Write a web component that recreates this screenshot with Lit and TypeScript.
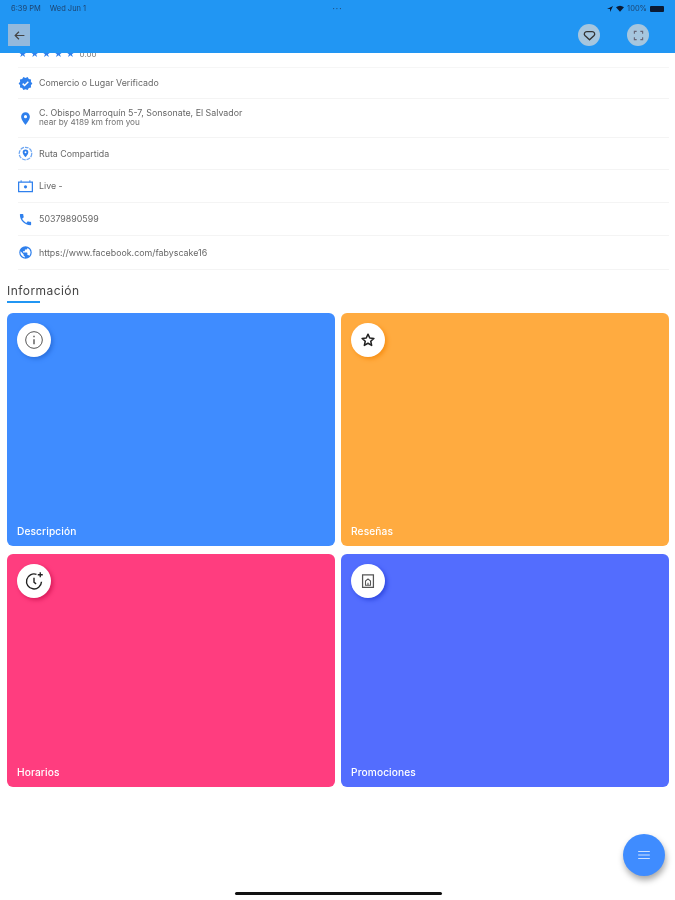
import { LitElement, html, css, svg } from "lit";
import { customElement } from "lit/decorators.js";

const BLUE = "#2f80ed";

const icons: Record<string, any> = {
  verified: svg`<path fill="${BLUE}" d="M23 12l-2.400-2.800.3-3.700-3.600-.8-1.900-3.200L12 3 8.600 1.500 6.700 4.700l-3.600.8.3 3.700L1 12l2.400 2.800-.3 3.700 3.600.8 1.900 3.200L12 21l3.400 1.500 1.900-3.200 3.600-.8-.3-3.700z"/><path fill="none" stroke="#fff" stroke-width="2.400" d="M7.500 12.200l3 3 6-6"/>`,
  pin: svg`<path fill="${BLUE}" d="M12 2C8.100 2 5 5.100 5 9c0 5.200 7 13 7 13s7-7.800 7-13c0-3.900-3.100-7-7-7zm0 9.500A2.500 2.500 0 1 1 12 6.500a2.500 2.500 0 0 1 0 5z"/>`,
  route: svg`<circle cx="12" cy="12" r="10" fill="none" stroke="${BLUE}" stroke-width="2" stroke-dasharray="6 1.500" opacity=".7"/><path fill="${BLUE}" d="M12 5.500a4.500 4.500 0 0 0-4.500 4.500c0 3.300 4.500 8 4.500 8s4.500-4.700 4.500-8A4.500 4.500 0 0 0 12 5.500zm0 6a1.500 1.500 0 1 1 0-3 1.500 1.500 0 0 1 0 3z"/>`,
  live: svg`<path fill="none" stroke="${BLUE}" stroke-width="2" d="M1 5h22v15H1z"/><path stroke="${BLUE}" stroke-width="1.500" d="M5 2v3M19 2v3"/><circle cx="12" cy="12.500" r="2.500" fill="${BLUE}"/>`,
  phone: svg`<path fill="${BLUE}" d="M6.600 10.800c1.400 2.800 3.800 5.100 6.600 6.600l2.200-2.200c.3-.3.700-.4 1-.2 1.100.4 2.300.6 3.600.6.600 0 1 .4 1 1V20c0 .6-.4 1-1 1C10.600 21 3 13.400 3 4c0-.6.400-1 1-1h3.500c.6 0 1 .4 1 1 0 1.300.2 2.500.6 3.600.1.300 0 .7-.2 1z"/>`,
  globe: svg`<path fill="${BLUE}" d="M12 2a10 10 0 1 0 0 20 10 10 0 0 0 0-20zm-1 17.900A8 8 0 0 1 4.200 10L9 15v1c0 1.100.9 2 2 2zm6.900-2.500A2 2 0 0 0 16 16h-1v-3a1 1 0 0 0-1-1H8v-2h2a1 1 0 0 0 1-1V7h2a2 2 0 0 0 2-2v-.4a8 8 0 0 1 2.900 12.800z"/>`,
};

const rows = [
  { i: "verified", h: 31, t: "Comercio o Lugar Verificado" },
  { i: "pin", h: 39, t: "C. Obispo Marroquín 5-7, Sonsonate, El Salvador", s: "near by 4189 km from you" },
  { i: "route", h: 32, t: "Ruta Compartida" },
  { i: "live", h: 33, t: "Live -" },
  { i: "phone", h: 33, t: "50379890599" },
  { i: "globe", h: 34, t: "https://www.facebook.com/fabyscake16" },
];

const cards = [
  {
    c: "blue", t: "Descripción",
    i: svg`<circle cx="12" cy="12" r="10" fill="none" stroke="#555" stroke-width="1.200"/><path stroke="#444" stroke-width="1.500" d="M12 11v6M12 7v1.800"/>`,
  },
  {
    c: "orange", t: "Reseñas",
    i: svg`<path fill="none" stroke="#222" stroke-width="1.800" stroke-linejoin="round" d="M12 5l2.100 4.600 5 .5-3.800 3.400 1.100 5-4.400-2.600-4.400 2.600 1.100-5-3.800-3.400 5-.5z"/>`,
  },
  {
    c: "pink", t: "Horarios",
    i: svg`<path fill="none" stroke="#222" stroke-width="1.700" d="M15 4A9 9 0 1 0 21 13M12 8v5.500l2.500 2"/><path stroke="#222" stroke-width="1.600" d="M19.500 1.500v6M16.500 4.500h6"/>`,
  },
  {
    c: "indigo", t: "Promociones",
    i: svg`<path fill="none" stroke="#555" stroke-width="1.500" d="M5.500 4.500h13v15h-13z"/><path fill="none" stroke="#555" stroke-width="1.300" d="M9 17v-5l3-2.500 3 2.500v5zM12 14v3"/>`,
  },
];

@customElement("app-root")
export class AppRoot extends LitElement {
  static styles = css`
    :host {
      display: block;
      width: 675px;
      height: 900px;
      overflow: hidden;
      position: relative;
      background: #fff;
      font-family: "Inter", "Liberation Sans", sans-serif;
      filter: blur(0.45px);
    }
    .top {
      position: relative;
      z-index: 2;
      height: 53px;
      background: #2196f3;
      box-sizing: border-box;
      display: flex;
      flex-direction: column;
    }
    .status {
      height: 17px;
      padding: 0 11px 0 11px;
      display: flex;
      align-items: center;
      justify-content: space-between;
      font-size: 7.500px;
      color: #1d4470;
    }
    .status .left { display: flex; gap: 9px; width: 200px; }
    .status .dots { letter-spacing: 1px; font-size: 7px; font-weight: 700; }
    .status .right { width: 200px; display: flex; gap: 3px; align-items: center; justify-content: flex-end; }
    .battery { width: 14px; height: 6px; background: #0b1a33; border-radius: 1px; }
    .bar {
      flex: 1;
      display: flex;
      align-items: flex-start;
      padding: 7px 26px 0 8px;
      justify-content: space-between;
    }
    .back {
      width: 22px;
      height: 22px;
      background: #93b9dc;
      display: flex;
      align-items: center;
      justify-content: center;
    }
    .acts { display: flex; gap: 27px; }
    .round {
      width: 22px;
      height: 22px;
      border-radius: 50%;
      background: #a6c6de;
      display: flex;
      align-items: center;
      justify-content: center;
    }
    .stars {
      height: 14px;
      overflow: hidden;
      margin: 0 6px 0 18px;
      border-bottom: 1px solid #f6f6f6;
    }
    .stars .inner {
      margin-top: -1px;
      display: flex;
      align-items: flex-start;
      gap: 2.500px;
      color: #2f80ed;
      font-size: 9px;
      line-height: 4px;
    }
    .stars .val { color: #777; margin-left: 2px; font-size: 8px; }
    .row {
      display: flex;
      align-items: center;
      margin: 0 6px 0 18px;
      border-bottom: 1px solid #f4f4f4;
      box-sizing: border-box;
    }
    .row svg { width: 15px; height: 15px; flex: none; margin-right: 6px; }
    .row .tx { color: #666; font-size: 8.850px; line-height: 9px; margin-top: -1px; }
    .row .sub { font-size: 8.200px; color: #707070; margin-top: 1.500px; }
    h2 {
      margin: 13px 0 0 7px;
      font-weight: 400;
      font-size: 12px;
      line-height: 15px;
      color: #444;
      letter-spacing: .45px;
    }
    .rule { width: 33px; height: 2px; background: #2196f3; margin: 3px 0 0 7px; }
    .grid {
      display: grid;
      grid-template-columns: 328px 328px;
      grid-auto-rows: 233px;
      column-gap: 6px;
      row-gap: 8px;
      margin: 10px 0 0 7px;
    }
    .card {
      border-radius: 6px;
      padding: 10px;
      box-sizing: border-box;
      display: flex;
      flex-direction: column;
      justify-content: space-between;
      color: #fff;
      font-size: 10.200px;
      font-weight: 500;
    }
    .card.blue { background: #3f8cff; --sh: #2a6fdd; }
    .card.orange { background: #ffab40; --sh: #f78f14; }
    .card.pink { background: #ff3d7f; --sh: #d81b5a; }
    .card.indigo { background: #536dfe; --sh: #2f48e0; }
    .badge {
      width: 34px;
      height: 34px;
      border-radius: 50%;
      background: #fff;
      box-shadow: 2px 2px 4px var(--sh);
      display: flex;
      align-items: center;
      justify-content: center;
    }
    .badge svg { width: 20px; height: 20px; }
    .label { margin-bottom: -1px; letter-spacing: .1px; }
    .fab {
      position: absolute;
      left: 623px;
      top: 834px;
      width: 42px;
      height: 42px;
      border-radius: 50%;
      background: #3f8cff;
      box-shadow: 1px 4px 6px rgba(0, 0, 0, .35);
      display: flex;
      align-items: center;
      justify-content: center;
    }
    .home {
      position: absolute;
      left: 235px;
      top: 892px;
      width: 207px;
      height: 3px;
      border-radius: 2px;
      background: #111;
    }
  `;

  render() {
    return html`
      <div class="top">
        <div class="status">
          <div class="left"><span>6:39 PM</span><span>Wed Jun 1</span></div>
          <div class="dots">···</div>
          <div class="right">
            <svg width="6" height="6" viewBox="0 0 10 10"><path fill="#0b1a33" d="M10 0L0 5h5v5z"/></svg>
            <svg width="8" height="7" viewBox="0 0 10 8"><path fill="#0b1a33" d="M0 2.500Q5-1.500 10 2.500L5 8z"/></svg>
            <span>100%</span>
            <div class="battery"></div>
          </div>
        </div>
        <div class="bar">
          <div class="back">
            <svg width="13" height="13" viewBox="0 0 24 24"><path fill="none" stroke="#444" stroke-width="2.200" d="M21 12H4M11 5l-7 7 7 7"/></svg>
          </div>
          <div class="acts">
            <div class="round">
              <svg width="13" height="13" viewBox="0 0 24 24"><path fill="none" stroke="#333" stroke-width="2.400" d="M12 20L3.500 12C1 9 3 5 7 5h10c4 0 6 4 3.500 7z"/></svg>
            </div>
            <div class="round">
              <svg width="11" height="11" viewBox="0 0 24 24"><path fill="none" stroke="#667" stroke-width="2.500" d="M3 8V3h5M16 3h5v5M21 16v5h-5M8 21H3v-5"/></svg>
            </div>
          </div>
        </div>
      </div>
      <div class="stars">
        <div class="inner"><span>★</span><span>★</span><span>★</span><span>★</span><span>★</span><span class="val">0.00</span></div>
      </div>
      ${rows.map(
        (r) => html`<div class="row" style="height:${r.h}px">
          <svg viewBox="0 0 24 24">${icons[r.i]}</svg>
          <div class="tx">${r.t}${r.s ? html`<div class="sub">${r.s}</div>` : ""}</div>
        </div>`
      )}
      <h2>Información</h2>
      <div class="rule"></div>
      <div class="grid">
        ${cards.map(
          (c) => html`<div class="card ${c.c}">
            <div class="badge"><svg viewBox="0 0 24 24">${c.i}</svg></div>
            <div class="label">${c.t}</div>
          </div>`
        )}
      </div>
      <div class="fab">
        <svg width="14" height="14" viewBox="0 0 24 24"><path stroke="#cfe2ff" stroke-width="2" d="M2 6h20M2 12h20M2 18h20"/></svg>
      </div>
      <div class="home"></div>
    `;
  }
}
